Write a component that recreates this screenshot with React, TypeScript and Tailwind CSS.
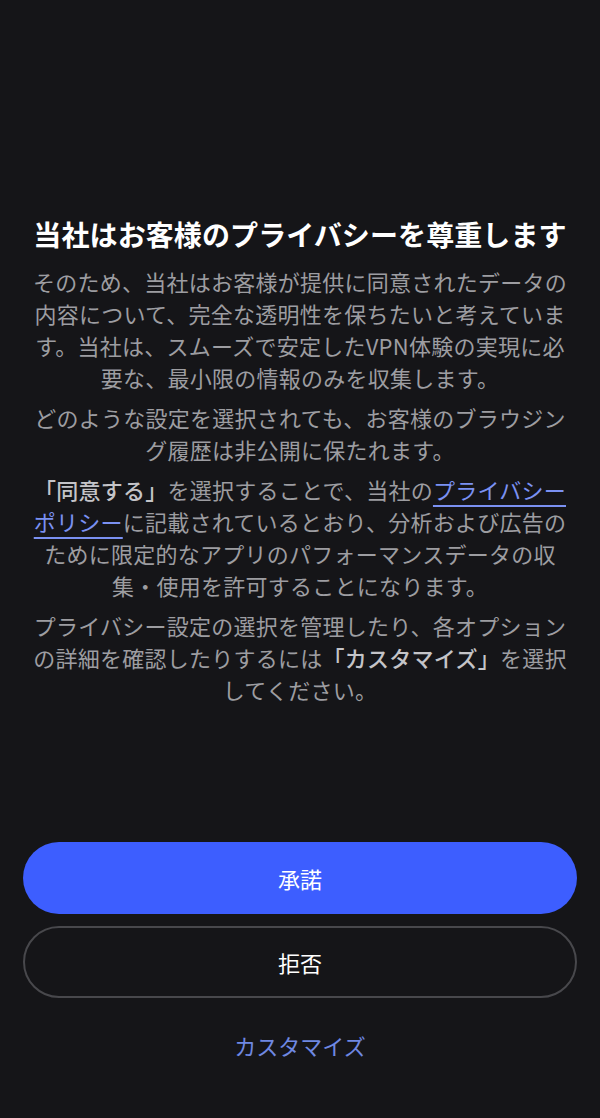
import React from 'react';

const font = { fontFamily: '"Noto Sans CJK JP", "Noto Sans", sans-serif' };

export default function App() {
  return (
    <div
      className="flex min-h-screen w-full flex-col bg-[#151518] px-[23px] text-[#9d9da1]"
      style={font}
    >
      <div className="flex flex-col items-center pt-[216px]">
        <h1 className="whitespace-nowrap text-center text-[28px] font-bold leading-[36px] tracking-[0.1px] text-white">
          当社はお客様のプライバシーを尊重します
        </h1>

        <div className="mt-[13px] flex flex-col gap-2 whitespace-nowrap text-center text-[22px] leading-[32px] tracking-[0.25px]">
          <p>
            そのため、当社はお客様が提供に同意されたデータの
            <br />
            内容について、完全な透明性を保ちたいと考えていま
            <br />
            す。当社は、スムーズで安定したVPN体験の実現に必
            <br />
            要な、最小限の情報のみを収集します。
          </p>
          <p>
            どのような設定を選択されても、お客様のブラウジン
            <br />
            グ履歴は非公開に保たれます。
          </p>
          <p>
            <span className="font-medium text-[#c4c4c8]">「同意する」</span>
            を選択することで、当社の
            <a className="text-[#7b91f2] underline decoration-2 underline-offset-[6px]">
              プライバシー
              <br />
              ポリシー
            </a>
            に記載されているとおり、分析および広告の
            <br />
            ために限定的なアプリのパフォーマンスデータの収
            <br />
            集・使用を許可することになります。
          </p>
          <p>
            プライバシー設定の選択を管理したり、各オプション
            <br />
            の詳細を確認したりするには
            <span className="font-medium text-[#c4c4c8]">「カスタマイズ」</span>
            を選択
            <br />
            してください。
          </p>
        </div>
      </div>

      <div className="flex-1" />

      <div className="flex flex-col gap-3">
        <button className="h-[72px] w-full rounded-full bg-[#3d5eff] text-[22px] text-white">
          承諾
        </button>
        <button className="h-[72px] w-full rounded-full border-2 border-[#48484c] text-[22px] text-white">
          拒否
        </button>
        <button className="mt-[11px] h-[48px] w-full text-[22px] text-[#6f88e2]">
          カスタマイズ
        </button>
      </div>
      <div className="h-[49px]" />
    </div>
  );
}
